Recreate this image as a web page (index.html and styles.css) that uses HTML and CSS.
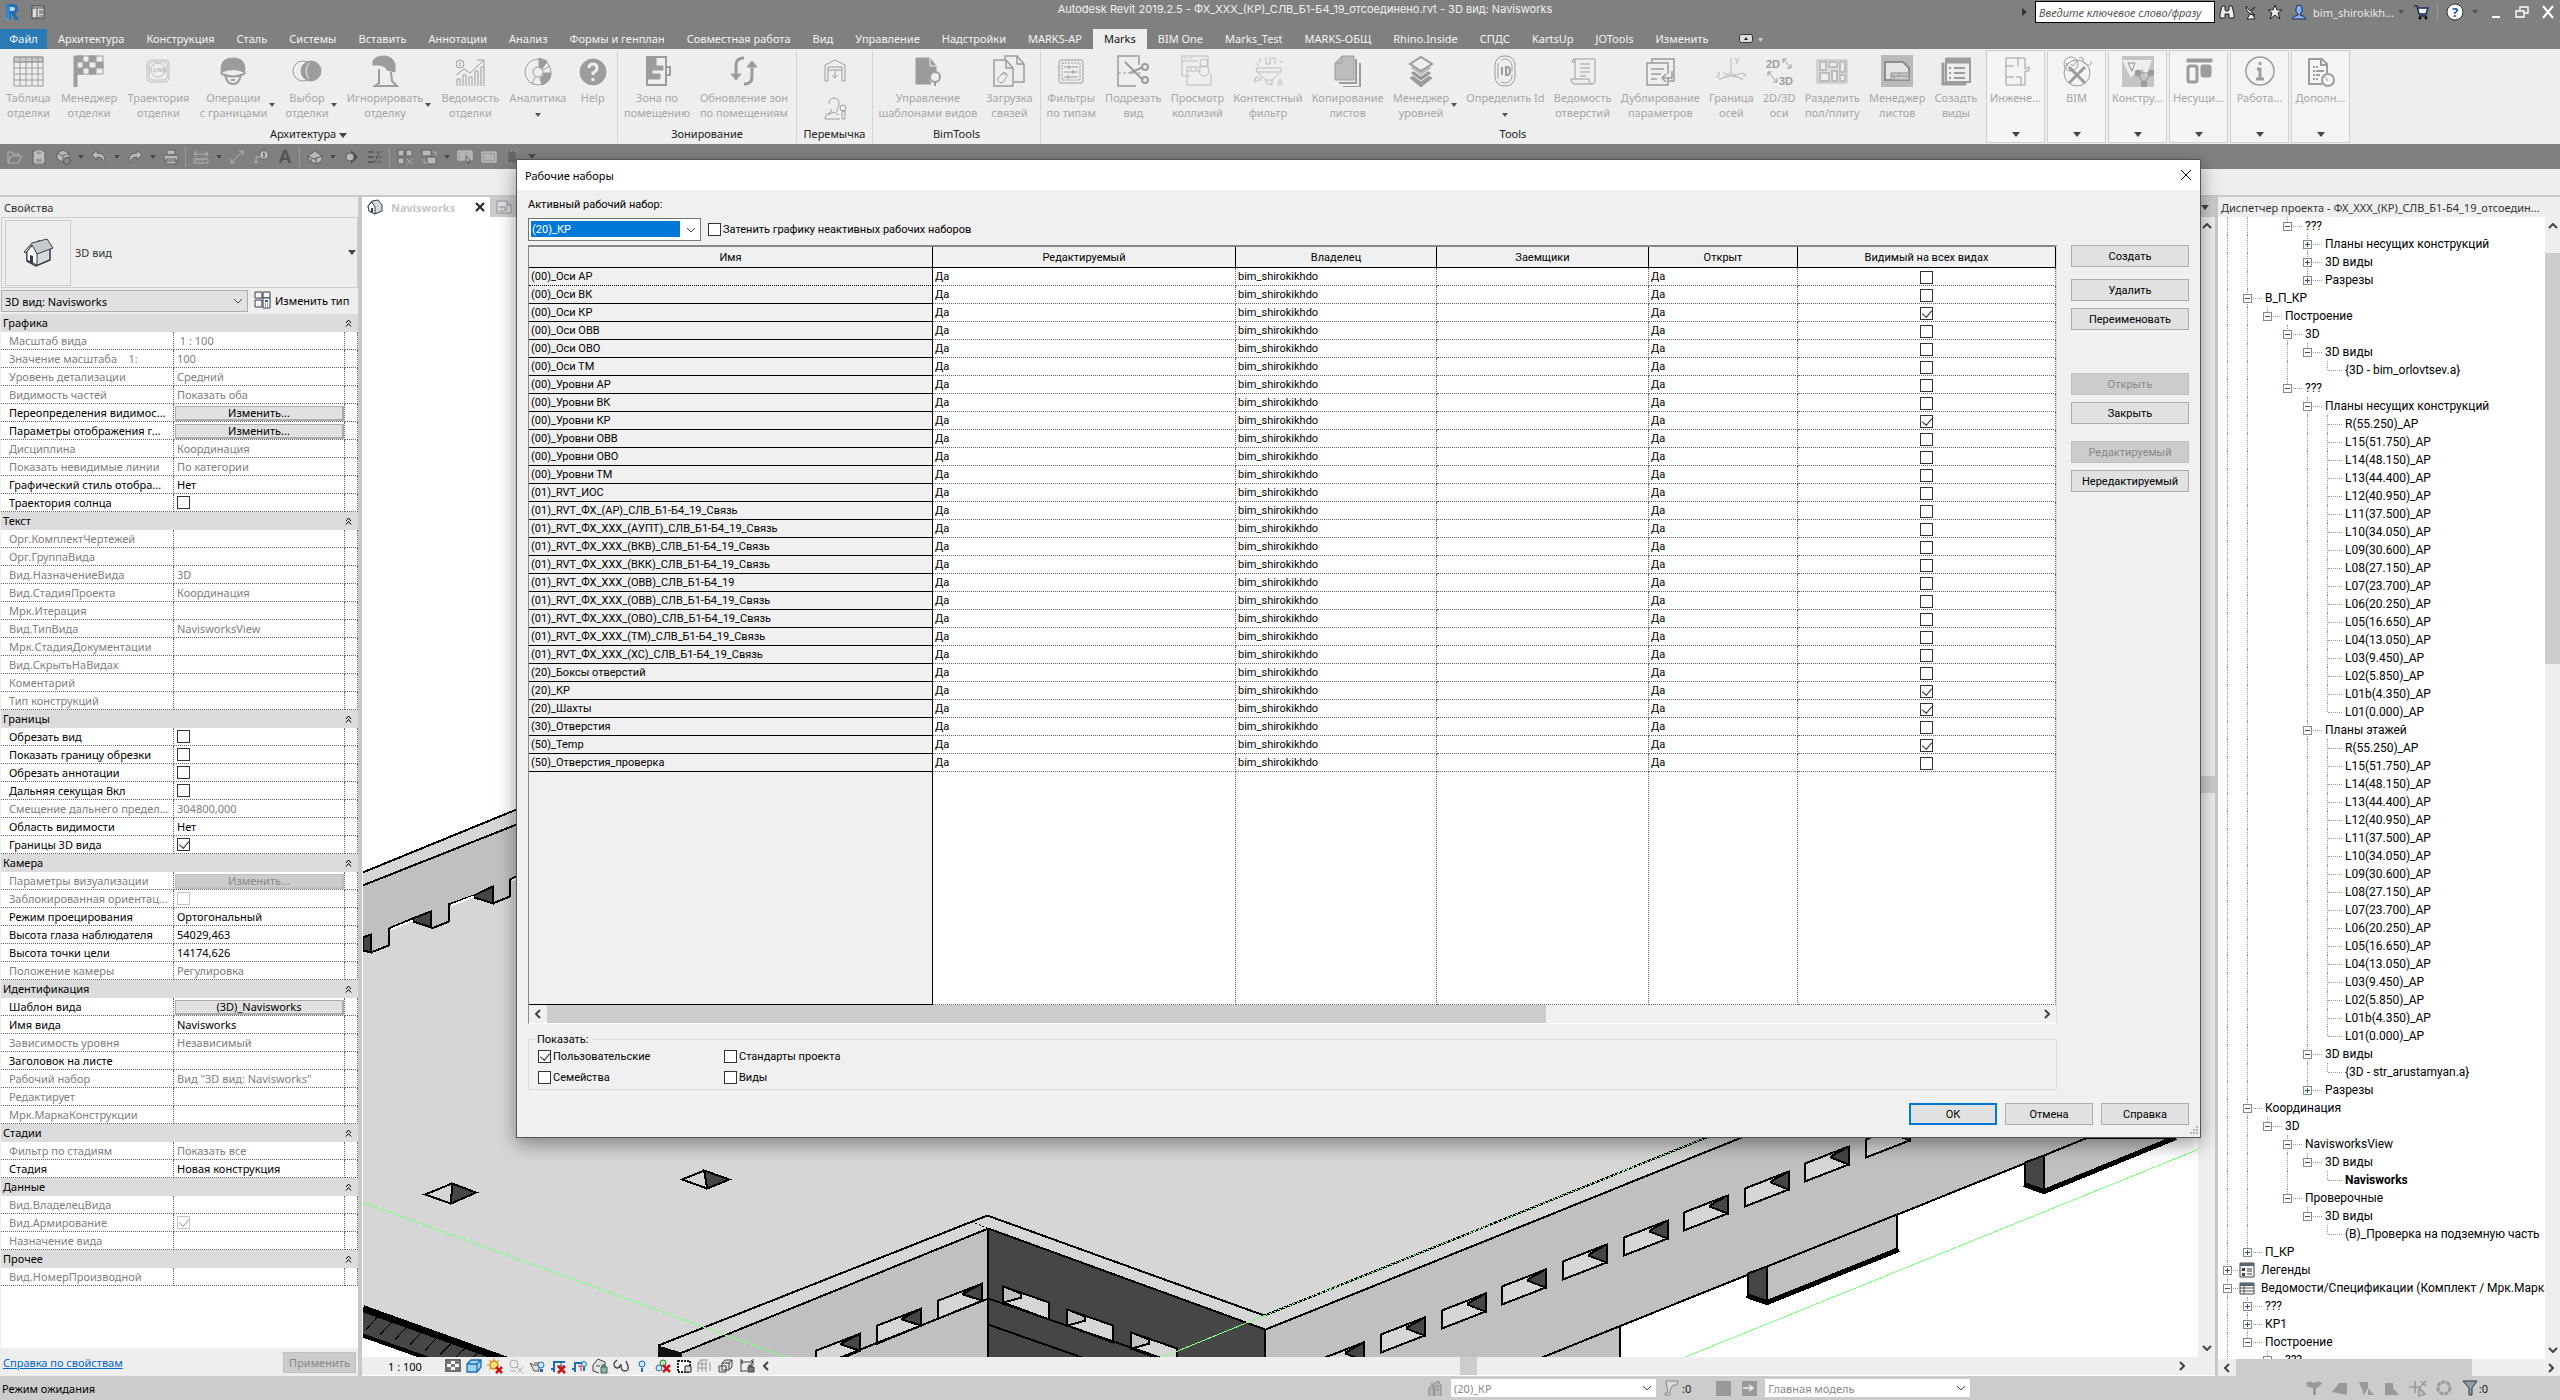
FILE: index.html
```html
<!DOCTYPE html>
<html lang="ru">
<head>
<meta charset="utf-8">
<title>Autodesk Revit 2019.2.5</title>
<link rel="stylesheet" href="styles.css">
</head>
<body>
<header class="titlebar">
  <div class="title-left">
    <svg class="s18" viewBox="0 0 18 18"><path d="M3 1h7q5 0 5 5 0 3-3 4l4 7h-4l-4-7v7H3z" fill="#1f6fb8"/><path d="M7 4h3q2 0 2 2t-2 2H7z" fill="#bcd9ee"/><path d="M3 12v5h4v-5z" fill="#4fb0dc"/><path d="M3 1l4 2v14l-4-2z" fill="#2c87cc"/></svg>
    <svg class="s16" viewBox="0 0 16 16"><rect x="2" y="2" width="12" height="12" fill="#ddd" stroke="#444"/><path d="M2 4h12M7 5v9M9 7h4M9 9h4M9 12h4" stroke="#444" fill="none"/></svg>
  </div>
  <h1>Autodesk Revit 2019.2.5 - ФХ_ХХХ_(КР)_СЛВ_Б1-Б4_19_отсоединено.rvt - 3D вид: Navisworks</h1>
  <div class="title-right">
    <i class="tri-right"></i>
    <input class="search" type="text" aria-label="Поиск" placeholder="Введите ключевое слово/фразу">
    <svg class="s16" viewBox="0 0 16 16"><path d="M3 2h3v4l1 1h2l1-1V2h3l2 8v4h-5v-4H6v4H1v-4z" fill="#eee" stroke="#222"/></svg>
    <svg class="s16" viewBox="0 0 16 16"><path d="M3 2q0 8 9 9L8 8l4-5-5 4zM7 10l-3 5h8l-2-4z" fill="#eee" stroke="#222"/></svg>
    <svg class="s16" viewBox="0 0 16 16"><path d="M8 1l2 5h5l-4 3 2 6-5-4-5 4 2-6-4-3h5z" fill="#eee" stroke="#222"/></svg>
    <svg class="s16" viewBox="0 0 16 16"><path d="M5 4q0-3 3-3t3 3v4l-2 2v1q5 1 6 4H1q1-3 6-4v-1L5 8z" fill="#7fb0f4" stroke="#1d2b58"/></svg>
    <span class="user">bim_shirokikh...</span><i class="caret"></i>
    <svg class="s16 cart" viewBox="0 0 16 16"><path d="M1 2h3l2 8h7l2-6H5M6 12h8" fill="#eee" stroke="#1d2b58" stroke-width="1.5"/><circle cx="7" cy="14" r="1.4"/><circle cx="13" cy="14" r="1.4"/></svg>
    <i class="tsep"></i>
    <svg class="s18" viewBox="0 0 18 18"><circle cx="9" cy="9" r="8" fill="#fff" stroke="#333"/><text x="9" y="14" text-anchor="middle" font-size="13" font-weight="bold" fill="#1a55b0">?</text></svg><i class="caret"></i>
    <button class="win" aria-label="Свернуть"><svg viewBox="0 0 14 14"><path d="M3 12h8" stroke="#fff" stroke-width="2"/></svg></button>
    <button class="win" aria-label="Развернуть"><svg viewBox="0 0 14 14"><path d="M5 5V2h8v6h-4M1 6h8v6H1z" stroke="#fff" stroke-width="1.4" fill="none"/></svg></button>
    <button class="win" aria-label="Закрыть"><svg viewBox="0 0 14 14"><path d="M2 1l10 12M12 1L2 13" stroke="#fff" stroke-width="2"/></svg></button>
  </div>
</header>

<nav class="tabs">
  <button class="file">Файл</button>
  <button>Архитектура</button><button>Конструкция</button><button>Сталь</button><button>Системы</button><button>Вставить</button><button>Аннотации</button><button>Анализ</button><button>Формы и генплан</button><button>Совместная работа</button><button>Вид</button><button>Управление</button><button>Надстройки</button><button>MARKS-АР</button><button class="active">Marks</button><button>BIM One</button><button>Marks_Test</button><button>MARKS-ОБЩ</button><button>Rhino.Inside</button><button>СПДС</button><button>KartsUp</button><button>JOTools</button><button>Изменить</button>
  <svg class="tabmode" viewBox="0 0 24 10"><rect x=".5" y=".5" width="13" height="8" rx="2" fill="#ddd" stroke="#333"/><path d="M5 6l2-3 2 3z" fill="#222"/><path d="M19 4h5l-2.500 4z" fill="#ccc"/></svg>
</nav>

<div class="ribbon">
  <section class="group g1">
    <div class="tools">
      <button class="tool"><svg viewBox="0 0 32 32"><path fill="#c9c9c9" d="M2 2h29v5H2z"/><path d="M2 2h29v29H2zM2 7h29M2 13h29M2 19h29M2 25h29M8 2v29M14 2v29M20 2v29M26 2v29"/></svg><span>Таблица<br>отделки</span></button>
      <button class="tool"><svg viewBox="0 0 32 32"><path class="f" d="M1 1h3v31H1zM4 1h6v6H4zM16 1h7v6h-7zM10 7h6v6h-6zM23 7h7v6h-7zM4 13h6v6H4zM16 13h7v6h-7z"/><path d="M4 1h26v18H4z"/></svg><span>Менеджер<br>отделки</span></button>
      <button class="tool"><svg class="lt" viewBox="0 0 32 32"><rect x="5" y="5" width="22" height="22" rx="4"/><rect x="7" y="7" width="18" height="18" rx="3"/><circle cx="16" cy="15" r="7"/><path d="M12 13v4h2M15 13v4M17 17v-4l2 4v-4M21 13v4h2v-4z"/></svg><span>Траектория<br>отделки</span></button>
      <button class="tool side"><svg viewBox="0 0 32 32"><path class="f" d="M4 14Q4 3 16 3t12 11l-1 3q-11-5-22 0z"/><path stroke-width="2" d="M7 14q-4 3-2 5l3 1q2 9 8 9t8-9l3-1q2-2-2-5M8 20q8 3 16 0M14 25h4"/></svg><span>Операции<br>с границами</span><i class="caret"></i></button>
      <button class="tool side"><svg viewBox="0 0 32 32"><circle class="f" cx="20" cy="16" r="10"/><circle cx="12" cy="16" r="10"/><path d="M18 8q-6 8 0 16" stroke="#eee"/></svg><span>Выбор<br>отделки</span><i class="caret"></i></button>
      <button class="tool side"><svg viewBox="0 0 32 32"><path class="f" d="M4 6q2-5 12-5 8 1 10 8v8l-8-2q-2-6-14-5z"/><path stroke-width="2" d="M10 14v14l-4 3h22l-5-5-1-9"/></svg><span>Игнорировать<br>отделку</span><i class="caret"></i></button>
      <button class="tool"><svg viewBox="0 0 32 32"><circle cx="6" cy="9" r="4"/><path d="M6 7v4M3 31V24h3v7M9 31V20h3v11M15 31V22h3v9M21 31V16h3v15M27 31V12h3v19M2 20l8-6 6 4L29 6M23 5h7v7"/></svg><span>Ведомость<br>отделки</span></button>
      <button class="tool"><svg viewBox="0 0 32 32"><circle cx="16" cy="17" r="13"/><circle cx="16" cy="17" r="5"/><path class="f" d="M22 18h7q0 9-9 12l-2-7q4-1 4-5zM17 3l8 3-5 8-3-2z"/><path d="M25 7l-5 6M28 11l-7 4M10 29l3-7"/></svg><span>Аналитика<br><i class="caret"></i></span></button>
      <button class="tool"><svg viewBox="0 0 32 32"><circle class="f" cx="16" cy="17" r="13"/><path d="M12 13q0-4 4-4t4 4q0 3-4 5v2M16 23v3" stroke="#eee" stroke-width="3"/></svg><span>Help<br>&nbsp;</span></button>
    </div>
    <h2>Архитектура <i class="caret big"></i></h2>
  </section>
  <section class="group g2">
    <div class="tools">
      <button class="tool"><svg viewBox="0 0 32 32"><path stroke-width="2" d="M6 2h19v28H6zM25 12h4v8h-4"/><path class="f" d="M7 3h8v8h7v4H11v4h8v5H7z"/></svg><span>Зона по<br>помещению</span></button>
      <button class="tool"><svg viewBox="0 0 32 32"><path stroke-width="3" d="M16 3q-8 0-8 7v11M16 29q8 0 8-7V11"/><path class="f" d="M3 19h10l-5 6zM19 12h10l-5-6z"/></svg><span>Обновление зон<br>по помещениям</span></button>
    </div>
    <h2>Зонирование</h2>
  </section>
  <section class="group g3">
    <div class="stack">
      <button class="mini" aria-label="Перемычка вниз"><svg viewBox="0 0 24 24"><path d="M2 23V7l10-5 10 5v16h-3V9H5v14zM5 12h14M12 13v7M9 17l3 3 3-3"/></svg></button>
      <button class="mini" aria-label="Мастер"><svg viewBox="0 0 24 24"><path d="M6 8q0-6 5-6t5 6q0 3-2 5v3M8 13v3l-5 3-1 4h15M5 19l6-3 5 3"/><circle cx="20" cy="12" r="3"/><path d="M19 15h3v8h-3z"/></svg></button>
    </div>
    <h2>Перемычка</h2>
  </section>
  <section class="group g4">
    <div class="tools">
      <button class="tool"><svg viewBox="0 0 32 32"><path class="f" d="M4 3h14l6 8v6q-6 0-7 7l2 5H4z"/><path d="M18 3v8h6" stroke="#eee"/><circle cx="23" cy="22" r="5" stroke-width="2"/><path stroke-width="2" d="M23 27v4"/></svg><span>Управление<br>шаблонами видов</span></button>
      <button class="tool"><svg viewBox="0 0 32 32"><path stroke-width="1.500" d="M12 5V1h12l7 8v18H21M1 5h12l7 8v18H1zM13 5v8h7M24 1v8h7"/><path d="M8 20q2-4 5-2t0 5l-2 2M13 20q-2-3-5 0l-3 3q-1 4 3 5 2 0 4-3"/></svg><span>Загрузка<br>связей</span></button>
    </div>
    <h2>BimTools</h2>
  </section>
  <section class="group g5">
    <div class="tools">
      <button class="tool"><svg viewBox="0 0 32 32"><rect x="4" y="5" width="24" height="23" rx="2"/><path stroke-dasharray="2 1" d="M7 8h18v17H7z"/><path d="M9 12h14M9 17h14M9 22h14M14 10v4M18 15v4M13 20v4"/></svg><span>Фильтры<br>по типам</span></button>
      <button class="tool"><svg viewBox="0 0 32 32"><path stroke-width="1.500" d="M22 10V1H1v30h18"/><path stroke-dasharray="3 2" d="M1 18h24"/><path stroke-width="2" d="M8 7l18 18M13 18l13-6"/><circle cx="28" cy="12" r="3" stroke-width="2"/><circle cx="28" cy="25" r="3" stroke-width="2"/></svg><span>Подрезать<br>вид</span></button>
      <button class="tool"><svg class="lt" viewBox="0 0 32 32"><path d="M1 1h26v12M1 1v20h8M1 6h16M3 3h3M8 3h3M6 12h14M6 12v18h24V18M6 16h14M9 14h2M14 14h2"/><circle cx="23" cy="8" r="4"/><circle cx="23" cy="16" r="5"/></svg><span>Просмотр<br>коллизий</span></button>
      <button class="tool"><svg class="lt" viewBox="0 0 32 32"><path d="M4 13h25v4l-9 8v5l-6-2v-3l-9-8zM5 17h22M13 25h8M8 3v5M4 8l3 3M14 2v7h4V3h5v6M28 7h3M3 24v4M28 23v3M9 22v4"/><circle cx="5" cy="24" r="2"/><circle cx="28" cy="28" r="2"/></svg><span>Контекстный<br>фильтр</span></button>
      <button class="tool"><svg viewBox="0 0 32 32"><path fill="#bdbdbd" d="M3 8l7-7h12v24H3z"/><path stroke-width="2" d="M24 4v24H7M28 8v24H11"/><path d="M3 8h7V1"/></svg><span>Копирование<br>листов</span></button>
      <button class="tool side"><svg viewBox="0 0 32 32"><path class="f" d="M5 23l11-6 11 6-11 9z"/><path fill="#999" stroke="#eee" d="M5 18l11-7 11 7-11 8z"/><path fill="#bdbdbd" stroke="#eee" d="M5 13l11-8 11 8-11 8z"/><path fill="#eee" stroke-width="2" d="M5 9l11-7 11 7-11 7z"/></svg><span>Менеджер<br>уровней</span><i class="caret"></i></button>
      <button class="tool"><svg viewBox="0 0 32 32"><rect x="6" y="1" width="20" height="30" rx="9"/><rect x="9" y="4" width="14" height="24" rx="7" stroke-dasharray="16 4"/><path d="M13 12v8M17 12v8h1q3 0 3-4t-3-4z" stroke-width="2"/></svg><span>Определить Id<br><i class="caret"></i></span></button>
      <button class="tool"><svg viewBox="0 0 32 32"><path d="M8 24V4h20v22q0 3-3 3H8q-4 0-4-5h18q0 5 3 5M8 4q-3 0-3 3h3M13 9h10M13 13h10M13 17h10M13 21h6"/></svg><span>Ведомость<br>отверстий</span></button>
      <button class="tool"><svg viewBox="0 0 32 32"><path stroke-width="1.500" d="M8 8V4h22v22h-5M3 8h21v22H3zM7 14h13M7 19h10M7 24h6"/><path fill="#eee" stroke-width="1.500" d="M28 16v7H18M22 19l-4 4 4 4"/></svg><span>Дублирование<br>параметров</span></button>
      <button class="tool"><svg class="lt" viewBox="0 0 32 32"><path d="M16 3v15l-12 7M16 18l12 7M8 18l20 6M28 18L4 24M20 3l2 3 2-3M22 6v3M2 18h3l-3 4h3M28 18l3 4M31 18l-3 4"/></svg><span>Граница<br>осей</span></button>
      <button class="tool"><svg viewBox="0 0 32 32"><text x="3" y="13">2D</text><text x="16" y="30">3D</text><path d="M20 4l8 9M20 8V4h4M28 9v4h-4M5 17l9 10M5 21v-4h4M14 23v4h-4"/></svg><span>2D/3D<br>оси</span></button>
      <button class="tool"><svg class="lt" viewBox="0 0 32 32"><path fill="#ddd" d="M1 5h30v23H1z"/><path stroke-width="2" fill="#eee" d="M4 7h6v8H4zM13 7h8v5h-8zM24 7h5v10h-5zM4 18h9v8H4zM16 16h5v10h-5zM24 20h5v6h-5z"/></svg><span>Разделить<br>пол/плиту</span></button>
      <button class="tool"><svg viewBox="0 0 32 32"><path fill="#bababa" stroke="none" d="M0 0h32v32H0z"/><path fill="#e4e4e4" stroke="#8e8e8e" stroke-width="2" d="M4 7h18l6 6v12H4z"/><path fill="#ccc" stroke="#8e8e8e" d="M10 18h18v7H10zM10 21h18M18 18v3M13 21v4"/></svg><span>Менеджер<br>листов</span></button>
      <button class="tool"><svg viewBox="0 0 32 32"><path stroke-width="2" d="M6 4h24v23H6z"/><path class="f" d="M6 3h24v5H6zM2 8h2v20h22v2H2z"/><path stroke-width="2" d="M14 13h11M14 18h11M14 23h11M9 13h2M9 18h2M9 23h2"/></svg><span>Созадть<br>виды</span></button>
    </div>
    <h2>Tools</h2>
  </section>
  <div class="panels">
    <button class="panel"><svg viewBox="0 0 32 32"><path d="M6 3h19v11l4-2v4h-4v14H6zM6 11h8M18 3v8M6 22h8M16 22h5v8"/></svg><span>Инжене...</span><i class="caret big"></i></button>
    <button class="panel"><svg viewBox="0 0 32 32"><circle cx="10" cy="9" r="7"/><path d="M5 8l2 3M7 8l-2 3M10 9l2 2 4-5M18 3q5-2 4 4l4 3q5 1 4-4"/><circle cx="16" cy="18" r="13"/><path stroke-width="3" d="M8 12l16 16M24 12L8 28"/></svg><span>BIM</span><i class="caret big"></i></button>
    <button class="panel"><svg viewBox="0 0 32 32"><path fill="#c4c4c4" stroke="none" d="M0 1h32v31H0z"/><path fill="#eee" stroke="none" d="M0 5h30L24 21l-4-8-4 8-4-2-3 4z"/><path stroke="#8e8e8e" d="M6 8h7l-3 8zM16 18l13 0M22 29l-7-11M22 29l7-11"/><circle class="f" cx="16" cy="18" r="3"/><circle class="f" cx="29" cy="18" r="3"/><circle class="f" cx="22" cy="29" r="3"/></svg><span>Констру...</span><i class="caret big"></i></button>
    <button class="panel"><svg viewBox="0 0 32 32"><path class="f" d="M4 4h25v3H4z"/><rect x="5" y="11" width="9" height="16" rx="2" stroke-width="3"/><rect class="f" x="18" y="10" width="10" height="12" rx="2"/></svg><span>Несущи...</span><i class="caret big"></i></button>
    <button class="panel"><svg viewBox="0 0 32 32"><circle cx="16" cy="16" r="14" stroke-width="1.500"/><path stroke-width="3" d="M16 7v3M16 13v10M13 14h3M12 24h8"/></svg><span>Работа...</span><i class="caret big"></i></button>
    <button class="panel"><svg viewBox="0 0 32 32"><path stroke-width="2" d="M17 29H4V4h13l5 5v9M16 4v6h6"/><path stroke-width="2" stroke-dasharray="2 1 20" d="M8 12h5M8 16h11M8 20h7M8 24h5"/><circle cx="23" cy="25" r="6" stroke-width="2"/><path d="M20 22l3 4"/></svg><span>Дополн...</span><i class="caret big"></i></button>
  </div>
</div>

<div class="qat">
  <button aria-label="Открыть"><svg viewBox="0 0 16 16"><path d="M1 14V3h4l1 2h6v2M1 14l3-7h11l-4 7z"/></svg></button>
  <button aria-label="Сохранить"><svg viewBox="0 0 16 16"><path class="q" d="M2 2h12v12H2z"/><path class="h" d="M5 2h6v4H5zM4 9h8v5H4z"/></svg></button>
  <button aria-label="Синхронизировать"><svg viewBox="0 0 16 16"><path class="q" d="M8 1l6 3v6l-6 3-6-3V4z"/><path stroke="#666" d="M2 4l6 3 6-3M8 7v6"/><circle cx="12" cy="12" r="3.500" fill="#888" stroke="#555"/></svg></button><i class="caret"></i>
  <button aria-label="Отменить"><svg viewBox="0 0 16 16"><path class="q" d="M1 6l5-5v3q9 0 8 9l-2 1q1-6-6-6v3z"/></svg></button><i class="caret"></i>
  <button aria-label="Повторить"><svg viewBox="0 0 16 16"><path class="q" d="M15 6l-5-5v3Q1 4 2 13l2 1q-1-6 6-6v3z"/></svg></button><i class="caret"></i>
  <button aria-label="Печать"><svg viewBox="0 0 16 16"><path class="q" d="M4 1h8v5H4zM1 6h14v6H1zM3 10h10v5H3z"/></svg></button>
  <i class="qsep"></i>
  <button aria-label="Измерить"><svg viewBox="0 0 16 16"><path d="M1 5h14M4 2L1 5l3 3M12 2l3 3-3 3M1 10h14v4H1zM4 10v2M7 10v2M10 10v2"/></svg></button><i class="caret"></i>
  <button aria-label="Размер"><svg viewBox="0 0 16 16"><path d="M2 14L14 2M2 10v4h4M10 2h4v4"/></svg></button>
  <button aria-label="Марка"><svg viewBox="0 0 16 16"><circle class="q" cx="11" cy="6" r="4.500"/><path d="M7 8H3v6M1 12l2 2 2-2"/><path stroke="#444" d="M10 5l1-1v5"/></svg></button>
  <button class="letter" aria-label="Текст">A</button>
  <i class="qsep"></i>
  <button aria-label="3D вид"><svg viewBox="0 0 16 16"><path class="q" d="M1 7l7-5 7 5v5l-6 3-7-3z"/><path stroke="#555" d="M1 7l6 3 8-3M9 9v5M4 10v3"/></svg></button><i class="caret"></i>
  <button aria-label="Разрез"><svg viewBox="0 0 16 16"><path fill="#4e4e4e" stroke="none" d="M8 1l7 7-7 7z"/><circle class="q" cx="7" cy="8" r="4"/></svg></button>
  <button aria-label="Тонкие линии"><svg viewBox="0 0 16 16"><path stroke="#5c5c5c" stroke-width="2" d="M1 3h6M1 8h6M1 13h6"/><path stroke="#5c5c5c" d="M9 3h6M9 8h6M9 13h6M12 3L8 13"/></svg></button>
  <i class="qsep"></i>
  <button aria-label="Закрыть окна"><svg viewBox="0 0 16 16"><path class="q" d="M1 1h6v6H1zM9 1h6v6H9zM1 9h6v6H1z"/><path d="M10 10l5 5M15 10l-5 5"/></svg></button>
  <button aria-label="Переключить окна"><svg viewBox="0 0 16 16"><path class="q" d="M1 1h9v6H1zM6 8h9v7H6z"/><path d="M12 3h3v4M3 10v4h3"/></svg></button><i class="caret"></i>
  <button aria-label="Выбор"><svg viewBox="0 0 16 16"><path class="h" d="M1 2h14v9H1zM4 3v7M6 3v7M8 3v7M11 3v7M13 3v7"/><path class="q" d="M9 7l5 5h-3l1 3-3-3z"/></svg></button>
  <button aria-label="Ведомость"><svg viewBox="0 0 16 16"><path class="h" d="M1 3h14v10H1zM4 5v6M6 5v6M8 5v6M10 5v6M12 5v6"/></svg></button>
  <button aria-label="Точки"><svg viewBox="0 0 16 16"><path stroke="#666" fill="#666" d="M4 3h6v10H4z"/><path stroke-dasharray="1 4" d="M1 2h14M1 14h14"/></svg></button>
  <i class="caret big"></i>
</div>
<div class="optionsbar"></div>

<main class="work">
  <aside class="props">
    <h3>Свойства</h3>
    <div class="typebox">
      <span class="thumb"><svg viewBox="0 0 32 32"><path d="M5 14v10l9 5 14-6V11L17 4z" fill="#d6dade" stroke="#353c48" stroke-width="1.500"/><path d="M5 14l6-6 4 9v11l-10-5z" fill="#fff" stroke="#353c48"/><path d="M2 15L10 6l15-4 6 9-16 6-5-9-6 8z" fill="#c5cacf" stroke="#353c48"/><path d="M8 18l3 1v7l-3-1z" fill="#353c48"/></svg></span>
      <span class="typename">3D вид</span><i class="caret big"></i>
    </div>
    <div class="typerow">
      <div class="combo inst"><select aria-label="Тип вида"><option>3D вид: Navisworks</option></select><svg class="chev" viewBox="0 0 10 6"><path d="M1 1l4 4 4-4"/></svg></div>
      <button class="edittype"><svg class="s18" viewBox="0 0 18 18"><path d="M1 1h7v6H1zM9 1h7v6H9zM1 9h7v7H1z" fill="#f6f6f6" stroke="#353c48"/><path d="M9 7h7v10H9z" fill="#fff" stroke="#353c48"/><path d="M11 9h3v2h-3z" fill="#2763b5"/><path d="M11 13h1M13 13h1M11 15h1M13 15h1" stroke="#353c48"/></svg>Изменить тип</button>
    </div>
    <div class="proplist"><table><colgroup><col class="c1"><col class="c2"><col class="c3"></colgroup><tbody id="props"></tbody></table></div>
    <footer><a href="#props">Справка по свойствам</a><button class="btn" disabled>Применить</button></footer>
  </aside>

  <section class="view">
    <div class="viewtabs">
      <div class="vtab"><svg class="s16" viewBox="0 0 16 16"><path d="M1 7l4-5 6-1 4 5v6l-7 3-6-3z" fill="#d6dade" stroke="#353c48"/><path d="M1 7l4-4 3 5v7l-6-3z" fill="#fff" stroke="#353c48"/><path d="M4 9h2v4H4z" fill="#353c48"/></svg><b>Navisworks</b><button aria-label="Закрыть вкладку"><svg viewBox="0 0 12 12"><path d="M2 2l8 8M10 2l-8 8" stroke="#222" stroke-width="2"/></svg></button></div>
      <div class="vtab2"><svg class="s16" viewBox="0 0 16 16"><path d="M1 2h10l4 4v8H1z" fill="#ddd" stroke="#8d949c"/><path d="M3 8h6v4H3M6 8v2M11 6v6M11 2v4h4" fill="none" stroke="#8d949c"/></svg></div>
      <i class="caret big"></i>
    </div>
    <div class="viewport">
      <svg class="model" viewBox="363 217 1834 1140" preserveAspectRatio="xMinYMin slice" shape-rendering="crispEdges">
        <defs>
          <g id="win"><path d="M0 0L44-17V1L0 18z" fill="#d6d6d6"/><path d="M26-7L44-17V1L26-6z" fill="#464646"/></g>
          <g id="win2"><path d="M0 0L44-17V0L0 18z" fill="#d6d6d6"/><path d="M25-7L44-17V0L25-6z" fill="#464646"/></g>
          <g id="dwin"><path d="M0 0L46 16V33L0 16z" fill="#d6d6d6"/><path d="M0 0L18 7V11L0 16z" fill="#c0c0c0"/></g>
        </defs>
        <path d="M363 872L560 790H1740L2100 1137 1541 1357H508L363 1305z" fill="#d6d6d6"/>
        <path d="M363 885L517 824V876L510 879V896L493 903V886L474 894 449 904V921L432 928V911L413 918 389 928V945L371 952 363 950z" fill="#c0c0c0"/>
        <g fill="#464646" stroke="#000" stroke-width="2"><path d="M413 918L431 911V927L413 921zM474 895L493 886V903L474 897zM363 937L371 934V952L363 950z"/></g>
        <g fill="none" stroke="#000" stroke-width="2">
          <path d="M363 872L517 809M363 885L517 824M371 952L389 945V928L413 918M432 928L449 921V904L474 895M493 903L510 896V879L517 876"/>
        </g>
        <path d="M391 929L413 920M451 905L474 896M512 880L517 878" stroke="#fff" stroke-width="2"/>
        <g stroke="#000" stroke-width="2"><path d="M425 1194L452 1183 476 1192 451 1203z" fill="#d6d6d6"/><path d="M452 1183L476 1192 451 1203z" fill="#464646"/><path d="M682 1179L704 1170 729 1179 707 1188z" fill="#d6d6d6"/><path d="M704 1170L729 1179 707 1188z" fill="#464646"/></g>
        <path d="M363 1335L431 1357H363z" fill="#fff"/><path d="M363 1308L508 1357H431L363 1335z" fill="#464646"/>
        <path d="M363 1308L508 1360" stroke="#000" stroke-width="7"/><path d="M363 1335L431 1359" stroke="#000" stroke-width="4"/>
        <path d="M366 1329l11-12M380 1334l12-13M395 1339l12-13M410 1344l12-13M425 1350l12-13M440 1354l12-12M456 1356l10-9M472 1357l8-6" stroke="#000"/>
        <path d="M682 1352L988 1228V1357H682z" fill="#c0c0c0"/>
        <path d="M988 1228L1265 1329V1357H988z" fill="#464646"/>
        <path d="M1265 1329L1741 1137H2088L1541 1357H1265z" fill="#c0c0c0"/>
        <path d="M2088 1137H2197V1357H1541z" fill="#fff"/>
        <path d="M1541 1357L1619 1326V1357z" fill="#c0c0c0"/>
        <path d="M658 1345L682 1352V1357H658z" fill="#111"/>
        <g stroke="#000" stroke-width="2">
          <use href="#win2" x="938" y="1300"/><use href="#win2" x="877" y="1325"/><use href="#win2" x="816" y="1350"/>
          <use href="#dwin" x="1003" y="1286"/><use href="#dwin" x="1067" y="1309"/><use href="#dwin" x="1131" y="1332"/>
          <use href="#win" x="1319" y="1359"/><use href="#win" x="1380" y="1334"/><use href="#win" x="1441" y="1310"/><use href="#win" x="1501" y="1286"/><use href="#win" x="1562" y="1261"/><use href="#win" x="1623" y="1237"/><use href="#win" x="1683" y="1212"/><use href="#win" x="1744" y="1188"/><use href="#win" x="1804" y="1163"/><use href="#win" x="1865" y="1139"/>
        </g>
        <g fill="none" stroke="#000" stroke-width="2">
          <path d="M658 1345L987 1215 1264 1315M682 1352L988 1228 1265 1329 1741 1137M988 1228V1357M840 1357L988 1298 1160 1357M988 1324L1082 1357M1265 1329V1357M1541 1357L2088 1137M1619 1326V1357"/>
          <path d="M971 1221l17 7" stroke-width="1" stroke-dasharray="2 2"/>
          <path d="M1747 1273L1766 1266V1302L1747 1294z" fill="#464646"/><path d="M1766 1266L1896 1214V1248L1766 1302z" fill="#c0c0c0"/>
          <path d="M2024 1162L2043 1155V1190L2024 1184z" fill="#464646"/><path d="M2043 1155L2087 1137H2174L2043 1190z" fill="#c0c0c0"/>
        </g>
        <path d="M1746 1295L1766 1302 1898 1249M2023 1184L2043 1191 2175 1137" fill="none" stroke="#000" stroke-width="5"/>
        <path d="M1264 1315L1706 1137" stroke="#000" stroke-width="2"/>
        <path d="M363 1202L787 1357M1161 1357L1264 1315M1683 1357L2197 1149" stroke="#80ff80" fill="none"/>
        <path d="M1264 1315L1706 1137" stroke="#80ff80" stroke-dasharray="3 2"/>
      </svg>
      <div class="vscroll"><svg viewBox="0 0 10 6"><path d="M1 5l4-4 4 4"/></svg><i class="thumb-v mid"></i><svg viewBox="0 0 10 6"><path d="M1 1l4 4 4-4"/></svg></div>
    </div>
    <div class="viewbar">
      <span class="scale">1 : 100</span>
      <button aria-label="Детализация"><svg viewBox="0 0 16 16"><path d="M1 2h14v11H1z" fill="#fff" stroke="#444" stroke-width="1.500"/><path d="M2 3h4v3H2zM10 3h4v3h-4zM6 6h4v3H6zM2 9h4v3H2zM10 9h4v3h-4z" fill="#777"/></svg></button>
      <button aria-label="Стиль"><svg viewBox="0 0 16 16"><path d="M1 6l4-4h10v7l-4 5H1zM1 6h10v8M11 6l4-4" fill="#9fd0f5" stroke="#1c6db0" stroke-width="1.300"/></svg></button>
      <button aria-label="Солнце"><svg viewBox="0 0 16 16"><circle cx="7" cy="7" r="4" fill="#ffe27a" stroke="#d98a00" stroke-width="1.500"/><path d="M7 0v2M0 7h2M2 2l2 2M12 2l-2 2M2 12l2-2" stroke="#d98a00"/><path d="M9 9l6 6M15 9l-6 6" stroke="#c81414" stroke-width="2.500"/></svg></button>
      <button aria-label="Тени"><svg viewBox="0 0 16 16"><g stroke="#aaa" fill="none"><circle cx="6" cy="6" r="4"/><path d="M2 13h6M9 9l6 6M15 9l-6 6"/></g></svg></button>
      <button aria-label="Визуализация"><svg viewBox="0 0 16 16"><path d="M1 5l3 2h6v6H5L3 9zM5 5h5" fill="#ddd" stroke="#555"/><circle cx="12" cy="7" r="3" fill="#cfe6ff" stroke="#1c6db0"/><path d="M11 11h3v3h-3z" fill="#1c6db0"/></svg></button>
      <button aria-label="Обрезка"><svg viewBox="0 0 16 16"><path d="M1 11h2M4 14V4h11" stroke="#1c6db0" stroke-width="2" fill="none"/><path d="M7 8h7M11 4v9" stroke="#555"/><path d="M8 8l7 7M15 8l-7 7" stroke="#c81414" stroke-width="2.500"/></svg></button>
      <button aria-label="Граница обрезки"><svg viewBox="0 0 16 16"><path d="M1 11h2M4 14V5h7" stroke="#1c6db0" stroke-width="2" fill="none"/><path d="M7 8h3v5" stroke="#c81414" fill="none"/><circle cx="13" cy="6" r="2.500" fill="#cfe6ff" stroke="#1c6db0"/><path d="M12 9h2v4h-2z" fill="#1c6db0"/></svg></button>
      <button aria-label="Блокировка"><svg viewBox="0 0 16 16"><path d="M1 7l5-6 7 3v4M1 7v6l6 2M4 8h4" fill="#ddd" stroke="#444"/><path d="M9 9h6v6H9zM10 9V7h3v2" fill="#8fb3ad" stroke="#3d5f5a"/></svg></button>
      <button aria-label="Временно скрыть"><svg viewBox="0 0 16 16"><path d="M1 5q0 5 3 5t3-3M8 8q0 5 4 5t3-5M1 5L4 2M15 8l-2-5M7 7h2" fill="none" stroke="#444" stroke-width="1.400"/></svg></button>
      <button aria-label="Скрытые элементы"><svg viewBox="0 0 16 16"><circle cx="8" cy="6" r="3" fill="#cfe6ff" stroke="#1c6db0"/><path d="M7 10h2v4H7z" fill="#1c6db0"/></svg></button>
      <button aria-label="Свойства вида"><svg viewBox="0 0 16 16"><circle cx="8" cy="5" r="3" fill="#bfe8bf" stroke="#287828"/><circle cx="4" cy="10" r="3" fill="#cfe6ff" stroke="#1c6db0"/><path d="M8 7l7 7M15 7l-7 7" stroke="#c81414" stroke-width="2.500"/></svg></button>
      <button aria-label="Аналитическая модель"><svg viewBox="0 0 16 16"><path d="M2 3h12v11H2z" fill="#fff" stroke="#222" stroke-width="2" stroke-dasharray="2 1"/><path d="M9 8h6v6H9z" fill="#ddd" stroke="#222"/></svg></button>
      <button aria-label="Наборы"><svg viewBox="0 0 16 16"><path d="M1 14V5l3-3h7M1 6h9M1 10h9M5 3v11M9 3v11M13 4v9" fill="none" stroke="#aaa" stroke-width="1.300"/></svg></button>
      <button aria-label="Смещение"><svg viewBox="0 0 16 16"><path d="M4 5l3-3h7v7l-3 3H4zM4 5h7v7M11 5l3-3M1 8v6h7v-6z" fill="#ddd" stroke="#444"/></svg></button>
      <button aria-label="Зависимости"><svg viewBox="0 0 16 16"><path d="M2 1v13M14 1v6M2 4h12M4 2L2 4l2 2M12 2l2 2-2 2M2 13h6" fill="none" stroke="#444"/><path d="M9 9h6v5H9zM10 9V7h3v2" fill="#777" stroke="#444"/></svg></button>
      <svg class="sarrow" viewBox="0 0 6 10"><path d="M5 1L1 5l4 4"/></svg>
      <i class="track"><i class="thumb-h"></i></i>
      <svg class="sarrow" viewBox="0 0 6 10"><path d="M1 1l4 4-4 4"/></svg>
    </div>
  </section>

  <aside class="browser">
    <h3>Диспетчер проекта - ФХ_ХХХ_(КР)_СЛВ_Б1-Б4_19_отсоедин...</h3>
    <div class="treewrap">
      <div class="tree" id="tree"></div>
      <div class="vscroll"><svg viewBox="0 0 10 6"><path d="M1 5l4-4 4 4"/></svg><i class="thumb-v long"></i><svg viewBox="0 0 10 6"><path d="M1 1l4 4 4-4"/></svg></div>
    </div>
    <div class="hscroll"><svg class="sarrow" viewBox="0 0 6 10"><path d="M5 1L1 5l4 4"/></svg><i class="track"><i class="thumb-h"></i></i><svg class="sarrow" viewBox="0 0 6 10"><path d="M1 1l4 4-4 4"/></svg></div>
  </aside>
</main>

<footer class="status">
  <span class="mode">Режим ожидания</span>
  <div class="mid">
    <svg class="s18" viewBox="0 0 18 18"><path d="M2 17V9l3-3 2 3v8M7 17V5l4-3 3 4v11M5 3v3M9 7h3M9 11h3" fill="#b5b5b5" stroke="#888"/></svg>
    <div class="combo"><select aria-label="Активный набор"><option>(20)_КР</option></select><svg class="chev" viewBox="0 0 10 6"><path d="M1 1l4 4 4-4"/></svg></div>
    <svg class="s18 fl" viewBox="0 0 18 18"><path d="M4 2h12l-1 4h-4l-3 5v5H3v-2h3z" fill="#ddd" stroke="#888"/></svg><span>:0</span>
    <svg class="s18 dm" viewBox="0 0 18 18"><rect x="1" y="2" width="15" height="15" fill="#999"/></svg>
    <svg class="s18" viewBox="0 0 18 18"><rect x="1" y="2" width="15" height="15" fill="#999"/><path d="M2 9h9M8 6l4 3-4 3" stroke="#eee" fill="none" stroke-width="1.500"/></svg>
    <div class="combo"><select aria-label="Модель"><option>Главная модель</option></select><svg class="chev" viewBox="0 0 10 6"><path d="M1 1l4 4 4-4"/></svg></div>
  </div>
  <div class="right">
    <svg class="s18" viewBox="0 0 18 18"><path d="M1 4q4-3 8 0 4-3 8 0l-3 4-3 1v7H8V9L3 8z" fill="#999"/></svg>
    <svg class="s18" viewBox="0 0 18 18"><path d="M1 13l7-9h8v12z" fill="#999"/></svg>
    <svg class="s18" viewBox="0 0 18 18"><path d="M2 3h9v6l6 7h-6V9L7 16z" fill="#999"/></svg>
    <svg class="s18" viewBox="0 0 18 18"><path d="M2 4h8v5l6 7H2z" fill="#999"/></svg>
    <svg class="s18" viewBox="0 0 18 18"><path d="M6 2v12M0 8h12M12 2l5 5M17 2l-5 5M10 9v8l6-2z" stroke="#999" fill="none" stroke-width="1.600"/></svg>
    <svg class="s18" viewBox="0 0 18 18"><circle cx="9" cy="9" r="6" fill="none" stroke="#999" stroke-width="3" stroke-dasharray="4 1"/></svg>
    <svg class="s18" viewBox="0 0 18 18"><path d="M2 2h14l-5 7v7H8V9z" fill="#8ea0ac" stroke="#333"/></svg><span>:0</span>
  </div>
</footer>

<section class="dialog" role="dialog" aria-labelledby="dlgtitle">
  <div class="dtitle"><h2 id="dlgtitle">Рабочие наборы</h2><button aria-label="Закрыть окно"><svg viewBox="0 0 12 12"><path d="M1 1l10 10M11 1L1 11" stroke="#000"/></svg></button></div>
  <div class="dbody">
    <div class="dleft">
      <label class="alabel" for="active">Активный рабочий набор:</label>
      <div class="arow">
        <div class="combo hot"><select id="active"><option>(20)_КР</option></select><svg class="chev" viewBox="0 0 10 6"><path d="M1 1l4 4 4-4"/></svg></div>
        <label class="chk"><input type="checkbox">Затенить графику неактивных рабочих наборов</label>
      </div>
      <div class="gridbox">
        <table class="ws"><colgroup><col class="w1"><col class="w2"><col class="w3"><col class="w4"><col class="w5"><col class="w6"></colgroup>
          <thead><tr><th>Имя</th><th>Редактируемый</th><th>Владелец</th><th>Заемщики</th><th>Открыт</th><th>Видимый на всех видах</th></tr></thead>
          <tbody id="worksets"></tbody>
        </table>
        <div class="hscroll"><svg class="sarrow" viewBox="0 0 6 10"><path d="M5 1L1 5l4 4"/></svg><i class="track"><i class="thumb-h"></i></i><svg class="sarrow" viewBox="0 0 6 10"><path d="M1 1l4 4-4 4"/></svg></div>
      </div>
      <fieldset><legend>Показать:</legend>
        <label class="chk"><input type="checkbox" checked>Пользовательские</label><label class="chk"><input type="checkbox">Стандарты проекта</label>
        <label class="chk"><input type="checkbox">Семейства</label><label class="chk"><input type="checkbox">Виды</label>
      </fieldset>
    </div>
    <div class="dright">
      <div class="bset"><button class="btn">Создать</button></div>
      <div class="bset near"><button class="btn">Удалить</button><button class="btn">Переименовать</button></div>
      <div class="bset far"><button class="btn" disabled>Открыть</button><button class="btn">Закрыть</button></div>
      <div class="bset mid"><button class="btn" disabled>Редактируемый</button><button class="btn">Нередактируемый</button></div>
    </div>
  </div>
  <div class="dfoot"><button class="btn primary">ОК</button><button class="btn">Отмена</button><button class="btn">Справка</button></div>
  <svg class="grip" viewBox="0 0 9 9"><path d="M7 1h2M4 4h2M7 4h2M1 7h2M4 7h2M7 7h2" stroke="#b4b4b4" stroke-width="2"/></svg>
</section>
<script src="app.js"></script>
</body>
</html>
```
FILE: styles.css
```css
* { box-sizing: border-box; }
body { margin: 0; height: 100vh; display: flex; flex-direction: column; background: #eee; color: #000; font: 11px/15px "Noto Sans", sans-serif; overflow: hidden; position: relative; }
h1, h2, h3 { margin: 0; font: inherit; }
button, input, select { font: inherit; color: inherit; margin: 0; }
button { background: none; border: 0; padding: 0; }
svg { display: block; flex: none; }
.s16 { width: 16px; height: 16px; }
.s18 { width: 18px; height: 18px; }
.caret { display: inline-block; flex: none; border: 3px solid transparent; border-top: 4px solid #555; border-bottom: 0; }
.caret.big { border-width: 4px 4px 0; border-top: 5px solid #444; }

.titlebar { height: 29px; background: #808080; color: #f2f2f2; display: grid; grid-template-columns: 1fr auto 1fr; align-items: start; flex: none; }
.titlebar h1 { font-family: Inter, sans-serif; padding: 2px 0 0 50px; }
.title-left { display: flex; gap: 9px; padding: 3px; align-items: center; }
.title-right { display: flex; align-items: center; justify-content: flex-end; gap: 8px; padding: 1px 5px 0 0; height: 23px; }
.tri-right { border: 4px solid transparent; border-left: 5px solid #333; border-right: 0; }
.search { width: 180px; height: 22px; border: 1px solid #000; background: #fff; padding: 0 3px; font-style: italic; border-radius: 0; margin-right: -4px; }
.search::placeholder { color: #555; opacity: 1; }
.user { color: #e8e8e8; margin: 0 -4px 0 -2px; }
.cart { margin-left: 1px; }
.tsep { width: 1px; height: 18px; background: #999; }
.win { width: 14px; margin-left: 3px; }
.win + .win { margin-left: 4px; }
.win svg { width: 14px; height: 14px; }

.tabs { height: 20px; background: #808080; color: #f4f4f4; display: flex; flex: none; }
.tabs button { padding: 0 11px 1px; white-space: nowrap; }
.tabs .file { background: #2a7ab5; padding: 0 0 1px; width: 47px; }
.tabs .active { background: #eee; color: #111; }
.tabmode { width: 24px; height: 10px; align-self: center; margin-left: 20px; }

.ribbon { height: 95px; flex: none; display: flex; background: #eee; color: #a6a6a6; }
.group { display: flex; flex-direction: column; border-right: 1px solid #d5d5d5; flex: none; margin: 1px 0; }
.g1 { width: 618px; }
.g2 { width: 179px; }
.g3 { width: 76px; }
.g4 { width: 168px; }
.g5 { width: 944px; border: 0; }
.group h2 { color: #222; text-align: center; padding-top: 3px; white-space: nowrap; }
.tools { display: flex; justify-content: space-around; padding: 5px 3px 0 1px; height: 73px; }
.tool { display: flex; flex-direction: column; align-items: center; gap: 3px; white-space: nowrap; position: relative; flex: none; }
.tool svg, .panel svg { width: 32px; height: 32px; }
.tool svg, .panel svg, .mini svg { stroke: #9c9c9c; fill: none; }
.ribbon svg.lt { stroke: #bcbcbc; }
.ribbon svg .f { fill: #9c9c9c; }
.ribbon svg text { font: bold 11px "Liberation Sans", sans-serif; fill: #9c9c9c; stroke: none; }
.tool.side { padding-right: 8px; }
.tool.side > .caret { position: absolute; right: 0; top: 48px; }
.stack { height: 73px; display: flex; flex-direction: column; align-items: center; gap: 14px; padding-top: 8px; }
.mini svg { width: 24px; height: 24px; }
.panels { display: flex; gap: 2px; padding: 1px; }
.panel { width: 59px; border: 1px solid #d0d0d0; background: #f4f4f4; display: flex; flex-direction: column; align-items: center; padding: 4px 0 5px; gap: 3px; }
.panel .caret { margin-top: auto; }

.qat { height: 25px; background: #808080; display: flex; align-items: center; padding-left: 3px; flex: none; }
.qat button { width: 24px; display: flex; justify-content: center; }
.qat svg { width: 16px; height: 16px; stroke: #b4b4b4; fill: none; }
.qat .q { fill: #b9b9b9; stroke: #606060; }
.qat .h { fill: #9a9a9a; stroke: #cfcfcf; }
.qat .caret { margin: 0 3px; border-top-color: #4a4a4a; }
.qsep { width: 1px; height: 20px; background: #9a9a9a; margin: 0 3px 0 2px; }
.letter { color: #555; font-weight: bold; font-size: 18px; }
.optionsbar { height: 28px; flex: none; border-bottom: 2px solid #c8c8c8; }

.work { flex: 1; min-height: 0; display: grid; grid-template: minmax(0, 1fr) / 362px minmax(0, 1fr) 345px; }
.work h3 { height: 20px; line-height: 22px; padding-left: 3px; color: #333; white-space: nowrap; }
.props { border-right: 4px solid #c8c8c8; display: flex; flex-direction: column; padding-left: 1px; min-height: 0; }
.typebox { border: 1px solid #ccc; height: 71px; display: flex; align-items: center; padding: 0 1px 0 3px; color: #333; }
.thumb { width: 66px; height: 66px; border: 1px solid #ccc; display: grid; place-items: center; }
.thumb svg { width: 32px; height: 32px; }
.typename { flex: 1; padding-left: 4px; }
.typerow { display: flex; align-items: center; height: 26px; }
.combo { position: relative; background: #fff; }
.combo select { appearance: none; border: 0; background: none; width: 100%; height: 100%; padding: 0 3px; border-radius: 0; display: block; }
.chev { position: absolute; right: 4px; top: 50%; margin-top: -3px; width: 10px; height: 6px; fill: none; stroke: #444; pointer-events: none; }
.inst { width: 247px; height: 22px; background: #e1e1e1; border: 1px solid #adadad; }
.edittype { display: flex; align-items: center; gap: 3px; padding: 0 0 2px 6px; }
.proplist { flex: 1; background: #fff; min-height: 0; }
.proplist table { width: 100%; border-spacing: 0; table-layout: fixed; }
.c1 { width: 173px; }
.c3 { width: 13px; }
.proplist td, .proplist th { height: 18px; padding: 0; line-height: 14px; white-space: nowrap; overflow: hidden; }
.proplist th { background: #dcdcdc; text-align: left; font-weight: normal; padding-left: 2px; }
.cat { display: flex; justify-content: space-between; align-items: center; padding-right: 6px; }
.cat svg { width: 7px; height: 8px; stroke: #000; fill: none; }
.proplist td { border-bottom: 1px dotted #666; border-right: 1px dotted #666; }
.proplist td:first-child { padding-left: 8px; }
.proplist td:nth-child(2) { padding-left: 3px; }
.proplist .off { color: #808080; }
.proplist td.hasbtn { padding: 1px 0 0 1px; }
.proplist .btn { width: 100%; height: 15px; line-height: 12px; border-width: 1px 2px 2px 1px; }
.proplist input { vertical-align: top; }
.props footer { height: 28px; flex: none; display: flex; justify-content: space-between; align-items: center; padding: 0 2px; }
.props a { color: #0066cc; }
.props footer .btn { width: 73px; height: 21px; }
.btn { background: #e1e1e1; border: 1px solid #adadad; text-align: center; white-space: nowrap; }
.btn:disabled { background: #ccc; color: #888; border-color: #bfbfbf; }
input[type=checkbox] { appearance: none; width: 13px; height: 13px; border: 1px solid #333; background: #fff; border-radius: 0; position: relative; flex: none; }
input[type=checkbox]:checked::after { content: ""; position: absolute; left: 3px; top: 0; width: 5px; height: 8px; border: solid #333; border-width: 0 1px 1px 0; transform: rotate(40deg); }
input[type=checkbox]:disabled { border-color: #c4c4c4; }
input[type=checkbox]:disabled:checked::after { border-color: #aaa; }

.view { display: flex; flex-direction: column; min-width: 0; min-height: 0; }
.viewtabs { height: 20px; flex: none; background: #ccc; display: flex; align-items: center; }
.vtab { width: 128px; height: 20px; background: #fff; display: flex; align-items: center; padding: 0 4px 0 5px; }
.vtab b { flex: 1; color: #c6c6c6; padding-left: 8px; }
.vtab button svg { width: 12px; height: 12px; }
.vtab2 { padding-left: 6px; flex: 1; }
.viewtabs .caret { margin-right: 6px; }
.viewport { flex: 1; min-height: 0; display: flex; background: #fff; padding-left: 1px; }
.model { flex: 1; min-width: 0; height: 100%; }
.vscroll { width: 17px; background: #eee; display: flex; flex-direction: column; justify-content: space-between; align-items: center; padding: 6px 0; position: relative; }
.vscroll svg { width: 10px; height: 6px; stroke: #444; stroke-width: 2; fill: none; }
.thumb-v { position: absolute; left: 0; width: 100%; background: #ccc; }
.thumb-v.mid { top: 49%; height: 17px; }
.thumb-v.long { top: 36px; height: 36%; }
.viewbar { height: 19px; flex: none; display: flex; align-items: center; padding: 0 24px 0 26px; border-bottom: 1px solid #fff; }
.viewbar .scale { width: 54px; }
.viewbar button { width: 21px; display: flex; justify-content: center; }
.viewbar button svg { width: 16px; height: 16px; }
.sarrow { width: 6px; height: 10px; stroke: #444; stroke-width: 2; fill: none; }
.viewbar .sarrow { margin: 0 6px; }
.track { flex: 1; height: 100%; position: relative; }
.thumb-h { position: absolute; top: 0; height: 100%; background: #ccc; }
.viewbar .thumb-h { left: 49%; width: 17px; }

.browser { border-left: 3px solid #c8c8c8; display: flex; flex-direction: column; min-width: 0; min-height: 0; }
.treewrap { flex: 1; min-height: 0; display: flex; }
.tree { flex: 1; min-width: 0; background: #fff; overflow: hidden; font: 12px/18px Roboto, sans-serif; }
.treewrap .vscroll { width: 15px; }
.node { display: flex; height: 18px; white-space: nowrap; }
.col { width: 20px; flex: none; position: relative; }
.col.line::before, .col.half::before { content: ""; position: absolute; left: 9px; top: 0; height: 100%; border-left: 1px dotted #999; }
.col.half::before { height: 9px; }
.col.own::after { content: ""; position: absolute; left: 10px; top: 9px; width: 14px; border-top: 1px dotted #999; }
.box { position: absolute; left: 5px; top: 5px; width: 9px; height: 9px; border: 1px solid #888; background: #fff; z-index: 1; }
.box::before, .box.plus::after { content: ""; position: absolute; background: #2b4b9b; }
.box::before { left: 1px; top: 3px; width: 5px; height: 1px; }
.box.plus::after { left: 3px; top: 1px; width: 1px; height: 5px; }
.node .label { padding-left: 7px; }
.node .ticon { width: 16px; height: 16px; margin: 1px 6px 0 1px; }
.node .ticon + .label { padding: 0; }
.node .strong { font-weight: bold; }
.hscroll { height: 17px; flex: none; display: flex; align-items: center; padding: 0 6px; gap: 6px; background: #eee; }
.browser .thumb-h { left: 0; width: 77%; }

.status { height: 24px; background: #ccc; flex: none; display: grid; grid-template-columns: 1425px 1fr auto; align-items: center; padding: 0 0 0 2px; }
.status > div { display: flex; align-items: center; color: #222; }
.status .combo { width: 205px; height: 18px; color: #888; }
.status .mid .s18 { margin-right: 6px; }
.status .mid .fl { margin: 0 2px 0 6px; }
.status .mid .dm { margin-left: 24px; margin-right: 8px; }
.status .right { gap: 8px; padding-right: 72px; }
.status .right span { margin-left: -8px; }

.dialog { position: absolute; left: 516px; right: 359px; top: 159px; border: 1px solid #555; background: #f0f0f0; box-shadow: 0 6px 18px rgba(0, 0, 0, .4); font: 11px/15px Roboto, sans-serif; }
.dtitle { height: 30px; background: #fff; display: flex; justify-content: space-between; align-items: center; padding: 0 8px 0 8px; }
.dtitle h2 { font: 11px/15px "Noto Sans", sans-serif; }
.dtitle svg { width: 12px; height: 12px; }
.dbody { display: grid; grid-template-columns: minmax(0, 1fr) 118px; gap: 14px; padding: 7px 11px 0; }
.dleft { display: flex; flex-direction: column; }
.alabel { height: 21px; }
.arow { display: flex; gap: 7px; align-items: center; height: 23px; margin-bottom: 4px; }
.hot { width: 173px; height: 23px; border: 1px solid #777; padding: 2px 20px 3px 2px; }
.hot select { background: #0078d7; color: #fff; padding: 0 1px; }
.chk { display: flex; align-items: center; gap: 2px; }
.gridbox { border: solid #888; border-width: 2px 1px 1px 1px; border-right-color: #ddd; border-bottom-color: #fff; }
.ws { width: 100%; border-spacing: 0; table-layout: fixed; background: #fff; }
.w1 { width: 404px; }
.w2 { width: 303px; }
.w3 { width: 201px; }
.w4 { width: 212px; }
.w5 { width: 149px; }
.ws th { height: 21px; padding: 0; background: #f0f0f0; border-right: 1px solid #000; border-bottom: 1px solid #000; font-weight: normal; line-height: 15px; }
.ws td { height: 18px; padding: 0 0 0 2px; border-right: 1px dotted #666; border-bottom: 1px dotted #666; line-height: 15px; white-space: nowrap; }
.ws td:first-child { background: #f0f0f0; border-right: 1px solid #000; border-bottom: 1px solid #000; }
.ws tr:first-child td:first-child { border-bottom-style: dotted; }
.ws td:last-child { text-align: center; padding: 0; }
.ws input { display: block; margin: 2px auto 0; }
.ws .filler td { height: 233px; }
.gridbox .hscroll { height: 18px; background: #f0f0f0; }
.gridbox .thumb-h { left: 0; width: 67%; }
fieldset { margin: 8px 0 0; border: 1px solid #dcdcdc; padding: 2px 9px 5px; height: 58px; display: grid; grid-template-columns: 186px 1fr; row-gap: 6px; }
legend { padding: 0 4px 0 1px; margin-left: -2px; }
.dright { padding-top: 48px; }
.bset { display: flex; flex-direction: column; gap: 8px; }
.near { margin-top: 13px; }
.far { margin-top: 44px; }
.bset.mid { margin-top: 18px; }
.bset .btn { height: 22px; margin-bottom: -1px; }
.dfoot { display: flex; justify-content: flex-end; gap: 8px; padding: 13px 11px 12px; }
.dfoot .btn { width: 88px; height: 22px; }
.dfoot .primary { border: 2px solid #0078d7; }
.grip { position: absolute; right: 2px; bottom: 2px; width: 9px; height: 9px; }
```
FILE: app.js
```js
// Properties palette: [name, value, flags]; flags: d = disabled, b = button, c = checkbox, x = checked
const props = [
  ["Графика", [["Масштаб вида", " 1 : 100", "d"], ["Значение масштаба    1:", "100", "d"], ["Уровень детализации", "Средний", "d"], ["Видимость частей", "Показать оба", "d"], ["Переопределения видимос...", "Изменить...", "b"], ["Параметры отображения г...", "Изменить...", "b"], ["Дисциплина", "Координация", "d"], ["Показать невидимые линии", "По категории", "d"], ["Графический стиль отобра...", "Нет", ""], ["Траектория солнца", "", "c"]]],
  ["Текст", [["Орг.КомплектЧертежей", "", "d"], ["Орг.ГруппаВида", "", "d"], ["Вид.НазначениеВида", "3D", "d"], ["Вид.СтадияПроекта", "Координация", "d"], ["Мрк.Итерация", "", "d"], ["Вид.ТипВида", "NavisworksView", "d"], ["Мрк.СтадияДокументации", "", "d"], ["Вид.СкрытьНаВидах", "", "d"], ["Коментарий", "", "d"], ["Тип конструкций", "", "d"]]],
  ["Границы", [["Обрезать вид", "", "c"], ["Показать границу обрезки", "", "c"], ["Обрезать аннотации", "", "c"], ["Дальняя секущая Вкл", "", "c"], ["Смещение дальнего предел...", "304800,000", "d"], ["Область видимости", "Нет", ""], ["Границы 3D вида", "", "cx"]]],
  ["Камера", [["Параметры визуализации", "Изменить...", "bd"], ["Заблокированная ориентац...", "", "cd"], ["Режим проецирования", "Ортогональный", ""], ["Высота глаза наблюдателя", "54029,463", ""], ["Высота точки цели", "14174,626", ""], ["Положение камеры", "Регулировка", "d"]]],
  ["Идентификация", [["Шаблон вида", "(3D)_Navisworks", "b"], ["Имя вида", "Navisworks", ""], ["Зависимость уровня", "Независимый", "d"], ["Заголовок на листе", "", ""], ["Рабочий набор", "Вид \"3D вид: Navisworks\"", "d"], ["Редактирует", "", "d"], ["Мрк.МаркаКонструкции", "", "d"]]],
  ["Стадии", [["Фильтр по стадиям", "Показать все", "d"], ["Стадия", "Новая конструкция", ""]]],
  ["Данные", [["Вид.ВладелецВида", "", "d"], ["Вид.Армирование", "", "cdx"], ["Назначение вида", "", "d"]]],
  ["Прочее", [["Вид.НомерПроизводной", "", "d"]]]
];
document.getElementById("props").innerHTML = props.map(([cat, rows]) =>
  `<tr><th colspan="3"><div class="cat">${cat}<svg viewBox="0 0 7 8"><path d="M1 4l2.500-3L6 4M1 7.500l2.500-3 2.500 3"/></svg></div></th></tr>` +
  rows.map(([name, value, f]) => {
    const off = f.includes("d");
    let cell = value.replace(/^ /, "&nbsp;");
    if (f.includes("b")) cell = `<button class="btn" ${off ? "disabled" : ""}>${value}</button>`;
    if (f.includes("c")) cell = `<input type="checkbox" aria-label="${name}" ${off ? "disabled" : ""} ${f.includes("x") ? "checked" : ""}>`;
    return `<tr class="${off ? "off" : ""}"><td>${name.replace(/ {4}/, "&nbsp;&nbsp;&nbsp; ")}</td><td class="${f.includes("b") ? "hasbtn" : ""}">${cell}</td><td></td></tr>`;
  }).join("")).join("");

// Worksets: a trailing * marks one that is visible in all views
const worksets = ["(00)_Оси АР", "(00)_Оси ВК", "(00)_Оси КР*", "(00)_Оси ОВВ", "(00)_Оси ОВО", "(00)_Оси ТМ", "(00)_Уровни АР", "(00)_Уровни ВК", "(00)_Уровни КР*", "(00)_Уровни ОВВ", "(00)_Уровни ОВО", "(00)_Уровни ТМ", "(01)_RVT_ИОС", "(01)_RVT_ФХ_(АР)_СЛВ_Б1-Б4_19_Связь", "(01)_RVT_ФХ_ХХХ_(АУПТ)_СЛВ_Б1-Б4_19_Связь", "(01)_RVT_ФХ_ХХХ_(ВКВ)_СЛВ_Б1-Б4_19_Связь", "(01)_RVT_ФХ_ХХХ_(ВКК)_СЛВ_Б1-Б4_19_Связь", "(01)_RVT_ФХ_ХХХ_(ОВВ)_СЛВ_Б1-Б4_19", "(01)_RVT_ФХ_ХХХ_(ОВВ)_СЛВ_Б1-Б4_19_Связь", "(01)_RVT_ФХ_ХХХ_(ОВО)_СЛВ_Б1-Б4_19_Связь", "(01)_RVT_ФХ_ХХХ_(ТМ)_СЛВ_Б1-Б4_19_Связь", "(01)_RVT_ФХ_ХХХ_(ХС)_СЛВ_Б1-Б4_19_Связь", "(20)_Боксы отверстий", "(20)_КР*", "(20)_Шахты*", "(30)_Отверстия", "(50)_Temp*", "(50)_Отверстия_проверка"];
document.getElementById("worksets").innerHTML = worksets.map(w => {
  const name = w.replace("*", "");
  return `<tr><td>${name}</td><td>Да</td><td>bim_shirokikhdo</td><td></td><td>Да</td><td><input type="checkbox" aria-label="${name}" ${w !== name ? "checked" : ""}></td></tr>`;
}).join("") + `<tr class="filler">${"<td></td>".repeat(6)}</tr>`;

// Project browser: [level, state, label]; state: + collapsed, - expanded, . leaf
const levels = ["R(55.250)", "L15(51.750)", "L14(48.150)", "L13(44.400)", "L12(40.950)", "L11(37.500)", "L10(34.050)", "L09(30.600)", "L08(27.150)", "L07(23.700)", "L06(20.250)", "L05(16.650)", "L04(13.050)", "L03(9.450)", "L02(5.850)", "L01b(4.350)", "L01(0.000)"].map(l => [5, ".", l + "_АР"]);
const nodes = [
  [3, "-", "???"], [4, "+", "Планы несущих конструкций"], [4, "+", "3D виды"], [4, "+", "Разрезы"],
  [1, "-", "В_П_КР"], [2, "-", "Построение"], [3, "-", "3D"], [4, "-", "3D виды"], [5, ".", "{3D - bim_orlovtsev.a}"],
  [3, "-", "???"], [4, "-", "Планы несущих конструкций"], ...levels, [4, "-", "Планы этажей"], ...levels,
  [4, "-", "3D виды"], [5, ".", "{3D - str_arustamyan.a}"], [4, "+", "Разрезы"],
  [1, "-", "Координация"], [2, "-", "3D"], [3, "-", "NavisworksView"], [4, "-", "3D виды"], [5, ".", "Navisworks", "strong"],
  [3, "-", "Проверочные"], [4, "-", "3D виды"], [5, ".", "(В)_Проверка на подземную часть"], [1, "+", "П_КР"],
  [0, "+", "Легенды", "legend"], [0, "-", "Ведомости/Спецификации (Комплект / Мрк.МаркаК", "sheet"],
  [1, "+", "???"], [1, "+", "КР1"], [1, "-", "Построение"], [2, "-", "???"]
];
const icons = {
  legend: '<path d="M1 1h14v14H1z" fill="#f4f4f4" stroke="#444"/><path d="M1 1h14v3H1z" fill="#5a6672"/><path d="M3 6h3v3H3zM3 11h3v3H3z" fill="#444"/><path d="M8 7h5M8 9h5M8 12h5" stroke="#444"/>',
  sheet: '<path d="M1 3h14v11H1z" fill="#fff" stroke="#444"/><path d="M1 3h14v3H1z" fill="#5a6672"/><path d="M1 8h14M1 11h14M5 6v8" stroke="#555"/>'
};
const continues = (i, k) => {
  for (let j = i + 1; j < nodes.length; j++) if (nodes[j][0] <= k) return nodes[j][0] === k;
  return k === 0;
};
document.getElementById("tree").innerHTML = nodes.map(([level, state, label, kind], i) => {
  let cols = "";
  for (let k = 0; k < level; k++) cols += `<span class="col ${continues(i, k) ? "line" : ""}"></span>`;
  const box = state === "." ? "" : `<i class="box ${state === "+" ? "plus" : ""}"></i>`;
  cols += `<span class="col own ${continues(i, level) ? "line" : "half"}">${box}</span>`;
  const icon = icons[kind] ? `<svg class="ticon" viewBox="0 0 16 16">${icons[kind]}</svg>` : "";
  return `<div class="node">${cols}${icon}<span class="label ${kind || ""}">${label}</span></div>`;
}).join("");
```
